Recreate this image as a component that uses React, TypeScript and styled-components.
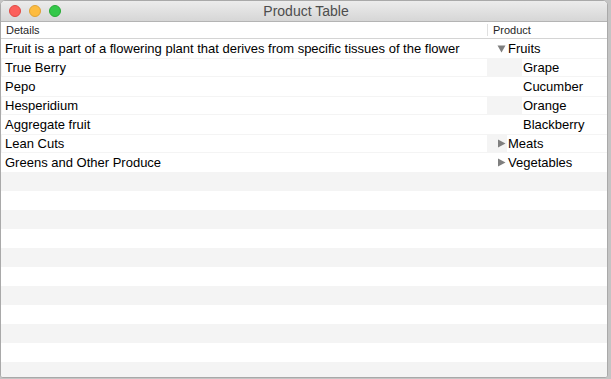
import styled, { createGlobalStyle } from "styled-components";

type Item = {
  details: string;
  product: string;
  level: 0 | 1;
  disclosure?: "open" | "closed";
};

const items: Item[] = [
  {
    details:
      "Fruit is a part of a flowering plant that derives from specific tissues of the flower",
    product: "Fruits",
    level: 0,
    disclosure: "open",
  },
  { details: "True Berry", product: "Grape", level: 1 },
  { details: "Pepo", product: "Cucumber", level: 1 },
  { details: "Hesperidium", product: "Orange", level: 1 },
  { details: "Aggregate fruit", product: "Blackberry", level: 1 },
  { details: "Lean Cuts", product: "Meats", level: 0, disclosure: "closed" },
  {
    details: "Greens and Other Produce",
    product: "Vegetables",
    level: 0,
    disclosure: "closed",
  },
];

const EMPTY_ROWS = 11;

const Triangle = ({ open }: { open: boolean }) => (
  <svg width="9" height="9" viewBox="0 0 9 9">
    {open ? (
      <polygon points="0.5,1.5 8.5,1.5 4.5,8.5" fill="#7f7f7f" />
    ) : (
      <polygon points="1,0.5 8.5,4.5 1,8.5" fill="#7f7f7f" />
    )}
  </svg>
);

export default function App() {
  return (
    <>
      <GlobalStyle />
      <Desktop>
        <Window>
          <TitleBar>
            <Lights>
              <Light $color="#fc605c" $edge="#de4a45" />
              <Light $color="#fdbc40" $edge="#dea235" />
              <Light $color="#34c84a" $edge="#27aa36" />
            </Lights>
            <Title>Product Table</Title>
          </TitleBar>
          <Header>
            <HeaderCell $width={487} $divider>
              Details
            </HeaderCell>
            <HeaderCell>Product</HeaderCell>
          </Header>
          <Body>
            {items.map((item, i) => (
              <Row key={item.details} $striped={i % 2 === 1}>
                <DetailsCell>{item.details}</DetailsCell>
                <Indent $level={item.level}>
                  {item.disclosure && (
                    <Triangle open={item.disclosure === "open"} />
                  )}
                </Indent>
                <ProductCell>{item.product}</ProductCell>
              </Row>
            ))}
            {Array.from({ length: EMPTY_ROWS }, (_, i) => (
              <Row key={"empty" + i} $striped={(items.length + i) % 2 === 1} />
            ))}
          </Body>
        </Window>
      </Desktop>
    </>
  );
}

const GlobalStyle = createGlobalStyle`
  html, body {
    margin: 0;
    padding: 0;
    background: #bdbdbd;
  }
  body {
    font-family: "Liberation Sans", Arial, sans-serif;
  }
`;

const Desktop = styled.div`
  width: 611px;
  height: 379px;
  overflow: hidden;
  background: #c4c4c4;
`;

const Window = styled.div`
  width: 608px;
  height: 378px;
  box-sizing: border-box;
  border: 1px solid #a9a9a9;
  border-radius: 5px 5px 3px 3px;
  background: #ffffff;
  display: flex;
  flex-direction: column;
  overflow: hidden;
`;

const TitleBar = styled.div`
  position: relative;
  height: 21px;
  flex: none;
  box-sizing: border-box;
  display: flex;
  align-items: center;
  justify-content: center;
  background: linear-gradient(#ececec, #d6d6d6);
  border-bottom: 1px solid #b4b4b4;
`;

const Lights = styled.div`
  position: absolute;
  left: 8px;
  top: 4px;
  display: flex;
  gap: 8px;
`;

const Light = styled.div<{ $color: string; $edge: string }>`
  width: 12px;
  height: 12px;
  box-sizing: border-box;
  border-radius: 50%;
  background: ${(p) => p.$color};
  border: 0.5px solid ${(p) => p.$edge};
`;

const Title = styled.div`
  font-size: 14px;
  color: #4d4d4d;
  padding-left: 4px;
`;

const Header = styled.div`
  height: 17px;
  flex: none;
  box-sizing: border-box;
  display: flex;
  align-items: center;
  border-bottom: 1px solid #d4d4d4;
  background: #ffffff;
`;

const HeaderCell = styled.div<{ $width?: number; $divider?: boolean }>`
  ${(p) => (p.$width ? `width: ${p.$width}px;` : "flex: 1;")}
  box-sizing: border-box;
  height: 12px;
  line-height: 12px;
  padding-left: 5px;
  font-size: 11px;
  color: #262626;
  border-right: ${(p) => (p.$divider ? "1px solid #e0e0e0" : "none")};
`;

const Body = styled.div`
  flex: 1;
  display: flex;
  flex-direction: column;
  overflow: hidden;
`;

const Row = styled.div<{ $striped: boolean }>`
  height: 19px;
  flex: none;
  display: flex;
  background: ${(p) => (p.$striped ? "#f4f4f4" : "#ffffff")};
`;

const DetailsCell = styled.div`
  width: 485px;
  margin: 1px 0 1px 1px;
  box-sizing: border-box;
  padding-left: 3px;
  background: #ffffff;
  font-size: 13px;
  line-height: 17px;
  color: #000000;
  white-space: nowrap;
  overflow: hidden;
`;

const Indent = styled.div<{ $level: number }>`
  width: ${(p) => (p.$level === 0 ? 20 : 35)}px;
  flex: none;
  box-sizing: border-box;
  padding-left: 10px;
  display: flex;
  align-items: center;
`;

const ProductCell = styled.div`
  flex: 1;
  margin: 1px 0;
  padding-left: 1px;
  background: #ffffff;
  font-size: 13px;
  line-height: 17px;
  color: #000000;
  white-space: nowrap;
`;
